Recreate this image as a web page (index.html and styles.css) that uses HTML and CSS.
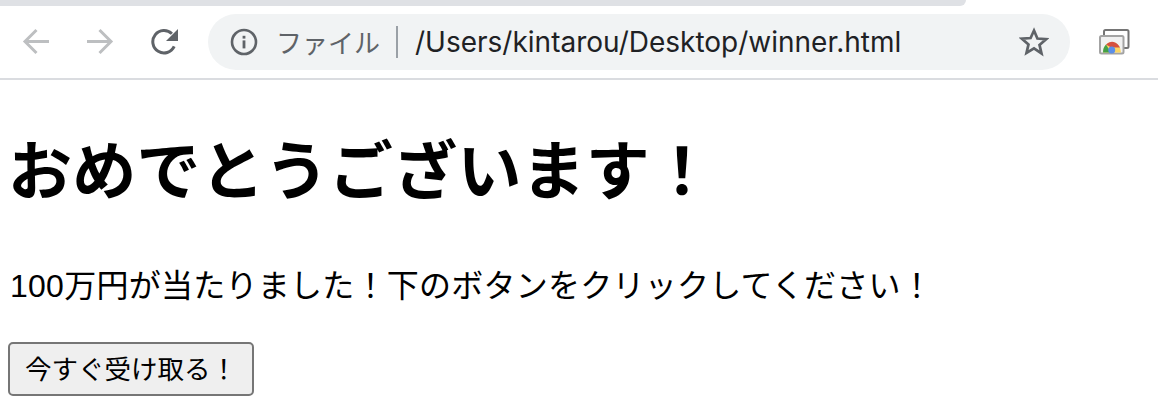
FILE: index.html
```html
<!DOCTYPE html>
<html lang="ja">
<head>
<meta charset="utf-8">
<title>winner</title>
<link rel="stylesheet" href="styles.css">
</head>
<body>
<div class="tabstrip"><div class="tab-edge"></div></div>
<header class="toolbar">
  <svg class="nav-icon back" viewBox="0 0 28 28" width="28" height="28"><path d="M27 13.500H3M14.500 2L3 13.500 14.500 25" fill="none" stroke="#bdbfc1" stroke-width="3"/></svg>
  <svg class="nav-icon forward" viewBox="0 0 28 28" width="28" height="28"><path d="M1 13.500h24M13.500 2L25 13.500 13.500 25" fill="none" stroke="#bdbfc1" stroke-width="3"/></svg>
  <svg class="nav-icon reload" viewBox="0 0 28 28" width="28" height="28"><path d="M23.200 18.400A11.200 11.200 0 1 1 20.900 5.800" fill="none" stroke="#5f6368" stroke-width="3"/><path d="M27 1v12H15z" fill="#5f6368"/></svg>
  <div class="omnibox">
    <svg class="info" viewBox="0 0 28 28" width="28" height="28"><circle cx="14" cy="14" r="12" fill="none" stroke="#5f6368" stroke-width="2.600"/><rect x="12.600" y="12.400" width="2.800" height="8" fill="#5f6368"/><rect x="12.600" y="7.800" width="2.800" height="2.800" fill="#5f6368"/></svg>
    <span class="scheme">ファイル</span>
    <span class="sep"></span>
    <span class="url">/Users/kintarou/Desktop/winner.html</span>
    <svg class="star" viewBox="0 0 30 30" width="30" height="30"><path d="M15 3.500l3.400 8 8.700.7-6.600 5.700 2 8.500L15 21.400 7.500 25.900l2-8.500-6.600-5.700 8.700-.7z" fill="none" stroke="#5f6368" stroke-width="2.700" stroke-linejoin="miter"/></svg>
  </div>
  <svg class="cast" viewBox="0 0 32 28" width="32" height="28">
    <rect x="5" y="2" width="24.500" height="18" rx="1.500" fill="#fff" stroke="#757575" stroke-width="2"/>
    <rect x="1" y="8" width="23.500" height="17.500" rx="1.500" fill="#f1f1f1" stroke="#a3a3a3" stroke-width="2"/>
    <path d="M4 24.500A9 10.500 0 0 1 22 24.500z" fill="#fbd663"/>
    <path d="M4 24.500A9 10.500 0 0 1 7 16.500l5 8z" fill="#43a047"/>
    <path d="M7 16.500A9 10.500 0 0 1 21 19.500H12z" fill="#d5503f"/>
    <circle cx="12.700" cy="22" r="3.500" fill="#5c8fe8"/>
  </svg>
</header>
<main class="page">
  <h1 class="title">おめでとうございます！</h1>
  <p class="message">100万円が当たりました！下のボタンをクリックしてください！</p>
  <button class="claim" type="button">今すぐ受け取る！</button>
</main>
</body>
</html>
```
FILE: styles.css
```css
* { box-sizing: border-box; }
html, body { margin: 0; height: 100%; overflow: hidden; }
body {
  background: #fff;
  color: #000;
  font-family: "Liberation Sans", "Noto Sans CJK JP", sans-serif;
}
.tabstrip { height: 6px; background: #fff; }
.tab-edge {
  width: 966px;
  height: 6px;
  background: #dfe1e5;
  border-bottom-right-radius: 12px;
}
.toolbar {
  height: 74px;
  display: flex;
  align-items: center;
  border-bottom: 2px solid #dadce0;
  padding-left: 22px;
}
.nav-icon { flex: none; margin-right: 36px; }
.forward { margin-right: 37px; }
.reload { margin-right: 29px; }
.omnibox {
  flex: none;
  width: 862px;
  height: 56px;
  border-radius: 28px;
  background: #f1f3f4;
  display: flex;
  align-items: center;
  padding-left: 22px;
}
.info { flex: none; margin-right: 18px; }
.scheme { font-size: 26px; color: #5f6368; position: relative; top: -1px; }
.sep { width: 2px; height: 32px; background: #9aa0a6; margin: 0 17px 0 16px; }
.url { font-family: "Inter", "Liberation Sans", sans-serif; font-size: 28px; color: #202124; flex: 1; white-space: nowrap; }
.star { flex: none; margin-right: 21px; }
.cast { flex: none; margin-left: 29px; }
.page { padding: 0 8px; }
.title {
  margin: 52px 0 0;
  font-size: 64px;
  letter-spacing: .2px;
  line-height: 80px;
  font-weight: 700;
}
.message {
  margin: 54px 0 0;
  padding-left: 2px;
  font-size: 32px;
  letter-spacing: .25px;
  line-height: 40px;
}
.claim {
  display: block;
  margin-top: 36px;
  width: 246px;
  height: 54px;
  padding: 0 0 4px;
  font: 26.500px "Liberation Sans", "Noto Sans CJK JP", sans-serif;
  color: #000;
  background: #efefef;
  border: 2px solid #767676;
  border-radius: 5px;
}
```
